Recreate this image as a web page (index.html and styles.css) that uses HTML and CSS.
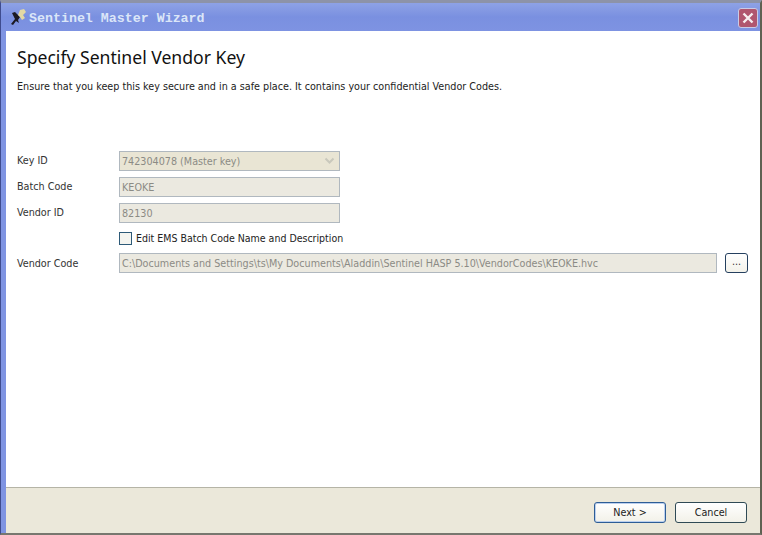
FILE: index.html
```html
<!DOCTYPE html>
<html lang="en">
<head>
<meta charset="utf-8">
<title>Sentinel Master Wizard</title>
<link rel="stylesheet" href="styles.css">
</head>
<body>
<div class="window">
  <header class="titlebar">
    <svg class="app-icon" width="20" height="18" viewBox="0 0 20 18" aria-hidden="true">
      <path d="M2 15 L6 10 L3 4 L6 3 L9 6 L11 8 L9 11 L10 14 L7 12 L4 16 Z" fill="#1c1a22"/>
      <path d="M9 6 L11 1 L15 0 L17 3 L14 6 L16 9 L13 11 L11 8 Z" fill="#e3d9a4"/>
    </svg>
    <span class="title">Sentinel Master Wizard</span>
    <button class="close" type="button" aria-label="Close">
      <svg width="12" height="12" viewBox="0 0 12 12"><path d="M1.5 1.5 L10.5 10.5 M10.5 1.5 L1.5 10.5" stroke="#f6eef0" stroke-width="2.4"/></svg>
    </button>
  </header>
  <div class="frame">
    <main class="content">
      <h1 class="heading">Specify Sentinel Vendor Key</h1>
      <p class="intro">Ensure that you keep this key secure and in a safe place. It contains your confidential Vendor Codes.</p>
      <form class="form">
        <div class="row">
          <span class="label">Key ID</span>
          <div class="field field-combo short"><span>742304078 (Master key)</span>
            <svg width="11" height="8" viewBox="0 0 11 8"><path d="M1.5 1.5 L5.5 5.5 L9.5 1.5" fill="none" stroke="#c9c8bc" stroke-width="2"/></svg>
          </div>
        </div>
        <div class="row">
          <span class="label">Batch Code</span>
          <div class="field short">KEOKE</div>
        </div>
        <div class="row">
          <span class="label">Vendor ID</span>
          <div class="field short">82130</div>
        </div>
        <div class="row row-check">
          <span class="label"></span>
          <span class="checkbox"></span>
          <span class="check-text">Edit EMS Batch Code Name and Description</span>
        </div>
        <div class="row row-code">
          <span class="label">Vendor Code</span>
          <div class="field grow">C:\Documents and Settings\ts\My Documents\Aladdin\Sentinel HASP 5.10\VendorCodes\KEOKE.hvc</div>
          <button class="browse" type="button">...</button>
        </div>
      </form>
    </main>
    <footer class="footer">
      <button class="btn btn-default" type="button">Next &gt;</button>
      <button class="btn" type="button">Cancel</button>
    </footer>
  </div>
</div>
</body>
</html>
```
FILE: styles.css
```css
* { box-sizing: border-box; }
html, body { margin: 0; padding: 0; }
body {
  width: 762px;
  height: 535px;
  overflow: hidden;
  background: #fff;
  font-family: "DejaVu Sans Condensed", "DejaVu Sans", sans-serif;
  font-size: 10.7px;
  color: #222;
}
.window {
  width: 762px;
  height: 535px;
  display: flex;
  flex-direction: column;
  border-top: 3px solid #8d93a8;
  border-bottom: 2px solid #77776f;
  border-left: 1px solid #3f4c8e;
  border-right: 2px solid #5f6152;
  background: #7f94e2;
}
.titlebar {
  flex: 0 0 28px;
  display: flex;
  align-items: center;
  padding: 2px 2px 0 8px;
  background: linear-gradient(#8ea2e6, #7a90e0 50%, #7e93e2);
}
.app-icon { flex: none; }
.title {
  flex: 1;
  font-family: "Liberation Mono", monospace;
  font-weight: bold;
  font-size: 13.3px;
  color: #dbe6f8;
}
.close {
  width: 20px;
  height: 20px;
  padding: 0;
  display: flex;
  align-items: center;
  justify-content: center;
  border: 1px solid #c9cbe6;
  border-radius: 3px;
  background: #b0566f;
}
.frame {
  flex: 1;
  min-height: 0;
  margin-left: 5px;
  display: flex;
  flex-direction: column;
  background: #fff;
}
.content { flex: 1; padding: 15px 0 0 11px; }
.heading {
  margin: 0;
  font-family: "Noto Sans", sans-serif;
  font-weight: 400;
  font-size: 17.6px;
  line-height: 22px;
  color: #111;
}
.intro {
  margin: 12px 0 0;
  line-height: 13px;
  color: #222;
}
.form {
  margin-top: 58px;
  display: flex;
  flex-direction: column;
}
.row {
  display: flex;
  align-items: center;
  height: 20px;
  margin-bottom: 6px;
}
.row-check { height: 16px; margin-top: 1px; margin-bottom: 7px; }
.label { flex: 0 0 102px; color: #333; padding-bottom: 2px; }
.row-code .label { padding-bottom: 0; }
.field {
  height: 20px;
  padding: 0 2px;
  display: flex;
  align-items: center;
  background: #ebe9e0;
  border: 1px solid #b0b8bf;
  color: #8b8b85;
}
.short { width: 221px; }
.field-combo { justify-content: space-between; background: #e9e5d4; padding-right: 4px; }
.grow { width: 598px; }
.checkbox {
  flex: none;
  width: 13px;
  height: 13px;
  border: 1px solid #2d5a78;
  background: #f4f4ef;
}
.check-text { margin-left: 4px; color: #222; font-size: 10.5px; }
.browse {
  margin-left: 8px;
  width: 23px;
  height: 20px;
  padding: 0 0 3px;
  font: inherit;
  color: #333;
  border: 1px solid #25405f;
  border-radius: 3px;
  background: linear-gradient(#fff, #f3f2ea);
}
.footer {
  flex: 0 0 46px;
  display: flex;
  justify-content: flex-end;
  gap: 9px;
  padding: 14px 13px 0 0;
  background: #ebe8da;
  border-top: 1px solid #b5b4a6;
}
.btn {
  width: 72px;
  height: 21px;
  padding: 0;
  font: inherit;
  color: #222;
  border: 1px solid #2f4a55;
  border-radius: 3px;
  background: linear-gradient(#fff, #f2f1e8);
}
.btn-default { border-color: #2d5d96; box-shadow: inset 0 0 0 1px #bcd0ee; }
```
